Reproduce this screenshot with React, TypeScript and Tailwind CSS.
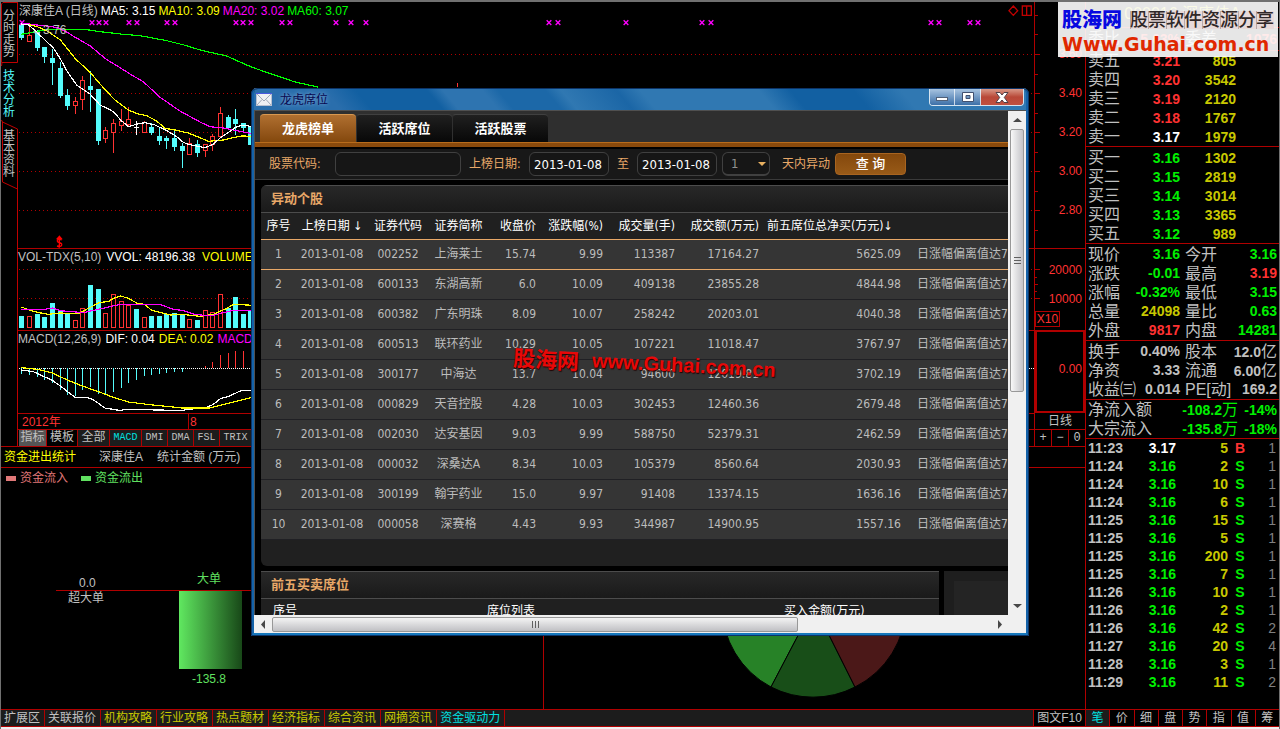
import React from "react";

const SANS = "font-['Liberation_Sans','Noto_Sans_CJK_SC',sans-serif]";
const TAHOMA = "font-['DejaVu_Sans_Condensed','DejaVu_Sans','Noto_Sans_CJK_SC',sans-serif]";

/* Chart data is stored on a grid of thirds of a pixel. */
type Candle = [number, number, number, number, number, boolean];

const candles: Candle[] = [
  [64, 75, 75, 113, 119, false],
  [88, 78, 105, 125, 125, true],
  [112, 90, 95, 143, 152, false],
  [133, 142, 142, 171, 188, false],
  [157, 148, 174, 188, 254, false],
  [181, 186, 204, 288, 293, false],
  [202, 266, 285, 318, 329, false],
  [226, 292, 303, 318, 341, true],
  [247, 228, 240, 299, 329, true],
  [271, 214, 258, 270, 335, false],
  [295, 267, 267, 422, 434, false],
  [316, 381, 390, 416, 429, true],
  [340, 356, 369, 398, 458, true],
  [364, 328, 363, 377, 392, true],
  [385, 321, 357, 376, 382, true],
  [433, 363, 367, 398, 398, true],
  [454, 369, 381, 399, 404, false],
  [478, 385, 408, 423, 435, false],
  [499, 408, 413, 423, 446, false],
  [523, 393, 413, 441, 452, false],
  [547, 429, 438, 453, 503, false],
  [568, 413, 431, 464, 464, true],
  [592, 421, 432, 458, 470, false],
  [616, 432, 433, 452, 470, true],
  [637, 402, 408, 435, 452, true],
  [661, 321, 339, 410, 413, true],
  [685, 345, 351, 384, 386, false],
  [706, 326, 357, 371, 404, false],
  [730, 369, 369, 383, 399, false],
  [751, 380, 380, 435, 435, false],
];

const volumes: [number, number, boolean][] = [
  [64, 213, false], [88, 213, true], [112, 206, false], [133, 216, false], [157, 174, false],
  [181, 195, false], [202, 206, false], [226, 225, true], [247, 189, true], [271, 120, false],
  [295, 132, false], [316, 204, true], [340, 147, true], [364, 168, true], [385, 180, true],
  [409, 192, false], [433, 216, true], [454, 213, false], [478, 213, false], [499, 208, false],
  [523, 204, false], [547, 208, false], [568, 222, true], [592, 225, false], [616, 195, true],
  [637, 202, true], [661, 147, true], [685, 189, false], [706, 156, false], [730, 207, false],
  [751, 195, false],
];

const macdBars: [number, number][] = [
  [64, 386], [88, 390], [112, 396], [133, 404], [157, 413], [181, 434], [202, 450], [226, 453],
  [247, 434], [271, 426], [295, 446], [316, 448], [340, 440], [364, 428], [385, 413], [409, 404],
  [433, 392], [454, 390], [478, 386], [499, 383], [523, 380], [547, 380], [616, 363], [637, 352],
  [661, 330], [685, 323], [706, 318], [730, 318],
];

const signalMarks = [22, 92, 99, 106, 129, 137, 167, 175, 236, 243, 251, 282, 290, 336, 351, 366, 549, 558, 626, 702, 711, 931, 939, 970, 978];

function Line({ points, color }: { points: string; color: string }) {
  return <polyline points={points} fill="none" stroke={color} strokeWidth={3.6} strokeLinejoin="round" />;
}

function Dots({ y }: { y: number }) {
  return <line x1={58} x2={3102} y1={y} y2={y} stroke="#b00000" strokeWidth={3} strokeDasharray="3 9" />;
}

function PriceChart() {
  return (
    <svg className="absolute inset-0 h-full w-full" shapeRendering="crispEdges" aria-hidden="true">
      <g transform="translate(-18 -2) scale(0.33333)">
        {[163, 280, 397, 514, 631].map((y) => <Dots key={y} y={y} />)}
        {candles.map(([x, hi, top, bottom, lo, up]) => (
          <g key={x} stroke={up ? "#ff3232" : "#54fcfc"} strokeWidth={3}>
            <line x1={x} x2={x} y1={hi} y2={top} />
            <line x1={x} x2={x} y1={bottom} y2={lo} />
            {up ? (
              <rect x={x - 6} y={top + 1} width={12} height={bottom - top - 2} fill="#000" />
            ) : (
              <rect x={x - 7.5} y={top} width={15} height={bottom - top} fill="#54fcfc" stroke="none" />
            )}
          </g>
        ))}
        <path d="M409 362V404M402 382H417" stroke="#fff" strokeWidth={3} />
        <line x1={1373} x2={1373} y1={248} y2={262} stroke="#ff3232" strokeWidth={3} />
        {signalMarks.map((x) => (
          <path key={x} d={`M${x * 3 - 7} 61l14 14m0 -14l-14 14`} stroke="#ff00ff" strokeWidth={4} shapeRendering="auto" />
        ))}
        <Line color="#00ff00" points="64,103 100,96 140,89 260,89 300,95 370,103 420,107 500,122 560,137 600,150 680,168 740,195 768,206 885,246 954,261" />
        <Line color="#ff00ff" points="70,70 110,75 150,79 175,84 200,96 226,112 271,138 316,176 360,203 400,228 430,245 480,292 540,333 600,366 630,380 670,384 700,390 760,402" />
        <Line color="#ffff00" points="86,74 112,80 145,95 181,120 226,176 271,218 316,270 345,300 385,330 412,341 440,347 470,363 495,385 525,390 565,399 600,413 625,424 670,420 700,413 725,408 760,409" />
        <Line color="#ffffff" points="64,72 86,75 112,98 160,144 180,175 202,215 230,255 271,283 300,315 325,327 340,335 362,360 385,380 412,372 435,368 465,375 500,392 530,410 550,427 565,433 590,438 615,443 640,433 661,413 690,394 710,380 730,376 760,380" />
        <path d="M178 709l-6 7h12zM185 720q-12-5-13 2q0 5 7 6q7 2 6 7q-2 7-14 3M178 714V743" fill="none" stroke="#ff0000" strokeWidth={4} shapeRendering="auto" />
        <path d="M3040 18l13 14l-13 14l-13-14z M3067 18h27v28h-27z M3080 18v28" fill="none" stroke="#c00000" strokeWidth={4} shapeRendering="auto" />
      </g>
    </svg>
  );
}

function VolumeChart() {
  return (
    <svg className="absolute inset-0 h-full w-full" shapeRendering="crispEdges" aria-hidden="true">
      <g transform="translate(-18 -4) scale(0.33333)">
        <Dots y={73} />
        <Dots y={160} />
        {volumes.map(([x, top, up]) =>
          up ? (
            <rect key={x} x={x - 6} y={top + 1} width={12} height={246 - top} fill="#000" stroke="#ff3232" strokeWidth={3} />
          ) : (
            <rect key={x} x={x - 7.5} y={top} width={15} height={248 - top} fill="#54fcfc" />
          ),
        )}
        <Line color="#ffff00" points="64,186 88,195 112,202 145,208 180,204 235,206 265,190 300,172 325,170 340,160 362,153 385,160 412,175 433,178 454,195 478,202 511,210 547,208 600,214 640,208 680,190 700,178 760,181" />
        <Line color="#ff00ff" points="64,193 133,193 157,189 181,197 250,203 300,192 360,178 480,178 520,193 547,196 580,207 610,211 640,211 661,205 700,196 760,196" />
      </g>
    </svg>
  );
}

function MacdChart() {
  return (
    <svg className="absolute inset-0 h-full w-full" shapeRendering="crispEdges" aria-hidden="true">
      <g transform="translate(-18 -86) scale(0.33333)">
        <line x1={58} x2={3102} y1={370.5} y2={370.5} stroke="#fff" strokeWidth={3} strokeDasharray="3 3" />
        {macdBars.map(([x, end]) => (
          <line key={x} x1={x} x2={x} y1={370} y2={end} stroke={end > 370 ? "#54fcfc" : "#ff3232"} strokeWidth={3} />
        ))}
        <Line color="#ffffff" points="64,375 100,380 157,406 181,423 226,458 262,458 280,464 295,475 316,490 340,493 362,497 375,493 412,494 433,493 465,495 547,496 575,492 616,489 640,478 661,461 685,455 720,438 760,435" />
        <Line color="#ffff00" points="64,368 112,373 157,384 202,405 247,423 295,440 340,457 385,471 433,477 478,482 547,489 628,489 685,475 760,456" />
      </g>
    </svg>
  );
}

function SideTabs() {
  const item = "flex w-full flex-col items-center text-xs leading-3";
  return (
    <nav className="relative w-[17px] shrink-0 bg-black">
      <svg className="absolute inset-0 h-full w-full" aria-hidden="true">
        <path d="M16.5 0.5H2L0.5 2V60.5H16.5V0M1 60.5L0.5 64M0.5 118L1.5 120L16.5 127V444M1.5 120V180L16.5 187" fill="none" stroke="#c00000" />
      </svg>
      <div className="relative flex flex-col gap-3 pt-2 pr-px">
        {["分时走势", "技术分析", "基本资料"].map((name, i) => (
          <button key={name} type="button" aria-label={name} className={`${item} ${i === 1 ? "text-[#54fcfc]" : "text-[#c0c0c0]"}`}>
            {name.split("").map((c) => <span key={c}>{c}</span>)}
          </button>
        ))}
      </div>
    </nav>
  );
}

function IndicatorTabs() {
  const tabs: [string, string][] = [
    ["指标", "w-[28px] bg-[#555] text-[#c0c0c0]"],
    ["模板", "w-[31px] bg-black text-[#c0c0c0]"],
    ["全部", "w-[32px] bg-[#1c1c1c] text-[#c0c0c0]"],
    ["MACD", "w-[32px] bg-[#1c1c1c] text-[#00e0e0]"],
    ["DMI", "w-[26px] bg-[#1c1c1c] text-[#c0c0c0]"],
    ["DMA", "w-[26px] bg-[#1c1c1c] text-[#c0c0c0]"],
    ["FSL", "w-[26px] bg-[#1c1c1c] text-[#c0c0c0]"],
    ["TRIX", "w-[32px] bg-[#1c1c1c] text-[#c0c0c0]"],
  ];
  return (
    <div className="flex h-[17px] border-t border-[#b00000] pl-px">
      {tabs.map(([name, style], i) => (
        <button
          key={name}
          type="button"
          className={`flex items-center justify-center border-r border-[#b00000] font-['Liberation_Mono','Noto_Sans_CJK_SC',monospace] leading-4 ${i > 2 ? "text-[10px]" : "text-xs"} ${style}`}
        >
          {name}
        </button>
      ))}
    </div>
  );
}

function AxisColumn() {
  return (
    <div className="flex w-[51px] shrink-0 flex-col border-l border-[#b00000] text-right text-xs text-[#ff3232]">
      <div className="relative h-[246px] pt-8 pr-[3px]">
        <svg className="absolute inset-0 h-full w-full" shapeRendering="crispEdges" aria-hidden="true">
          <path d="M0 52.5h5M0 91.5h5M0 130.5h5M0 169.5h5M0 208.5h5M0 72.5h3M0 111.5h3M0 150.5h3M0 189.5h3M0 32.5h3M0 13.5h3M0 228.5h3" stroke="#b00000" />
        </svg>
        {["3.60", "3.40", "3.20", "3.00", "2.80"].map((v) => <div key={v} className="h-[39px] leading-[41px]">{v}</div>)}
      </div>
      <div className="relative h-[82px] border-t border-[#b00000] pt-[7px] pr-[3px]">
        <svg className="absolute inset-0 h-full w-full" shapeRendering="crispEdges" aria-hidden="true">
          <path d="M0 20.5h5M0 49.5h5M0 28.5h2M0 35.5h3M0 42.5h2" stroke="#b00000" />
        </svg>
        <div className="h-[29px] leading-[29px]">20000</div>
        <div className="h-[29px] leading-[29px]">10000</div>
        <div className="mt-[-3px] w-[25px] border border-[#b00000] text-center leading-[14px]">X10</div>
      </div>
      <div className="flex h-[83px] items-center justify-end border-2 border-[#b00000] pr-px pb-1.5">
        <span>0.00</span>
      </div>
      <div className="h-[16px] text-center leading-[16px] text-[#c0c0c0]">日线</div>
      <div className="flex h-[17px] border-t border-[#b00000] font-['Liberation_Mono',monospace] text-[#c0c0c0]">
        <button type="button" className="flex-1 border-r border-[#b00000] text-center leading-4">+</button>
        <button type="button" className="flex-1 border-r border-[#b00000] text-center leading-4">−</button>
        <button type="button" className="flex-1 text-center leading-4">0</button>
      </div>
    </div>
  );
}

const G = "text-[#00f000]";
const R = "text-[#ff3232]";
const Y = "text-[#c8c800]";
const W = "text-[#c0c0c0]";

const sells = [["卖五", "3.21", "805"], ["卖四", "3.20", "3542"], ["卖三", "3.19", "2120"], ["卖二", "3.18", "1767"], ["卖一", "3.17", "1979"]];
const buys = [["买一", "3.16", "1302"], ["买二", "3.15", "2819"], ["买三", "3.14", "3014"], ["买四", "3.13", "3365"], ["买五", "3.12", "989"]];

const quotes = [
  ["现价", "3.16", G, "今开", "3.16", G],
  ["涨跌", "-0.01", G, "最高", "3.19", R],
  ["涨幅", "-0.32%", G, "最低", "3.15", G],
  ["总量", "24098", Y, "量比", "0.63", G],
  ["外盘", "9817", R, "内盘", "14281", G],
];
const ratios = [
  ["换手", "0.40%", W, "股本", "12.0亿", W],
  ["净资", "3.33", W, "流通", "6.00亿", W],
  ["收益㈢", "0.014", W, "PE[动]", "169.2", W],
];

const ticks = [
  ["11:23", "3.17", "5", "B", "1"], ["11:24", "3.16", "2", "S", "1"], ["11:24", "3.16", "10", "S", "1"],
  ["11:24", "3.16", "6", "S", "1"], ["11:25", "3.16", "15", "S", "1"], ["11:25", "3.16", "5", "S", "1"],
  ["11:25", "3.16", "200", "S", "1"], ["11:25", "3.16", "7", "S", "1"], ["11:26", "3.16", "10", "S", "1"],
  ["11:26", "3.16", "2", "S", "1"], ["11:26", "3.16", "42", "S", "2"], ["11:27", "3.16", "20", "S", "4"],
  ["11:28", "3.16", "3", "S", "1"], ["11:29", "3.16", "11", "S", "2"],
];

function Book({ rows, color }: { rows: string[][]; color: string }) {
  return (
    <div className="border-b border-[#b00000] pl-0.5">
      {rows.map(([label, price, volume]) => (
        <div key={label} className="flex h-[19px] items-center">
          <span className={`w-[40px] text-base leading-[19px] ${W}`}>{label}</span>
          <span className={`w-[52px] text-right font-bold ${label === "卖一" ? "text-white" : color}`}>{price}</span>
          <span className={`w-[56px] text-right font-bold ${Y}`}>{volume}</span>
        </div>
      ))}
    </div>
  );
}

function Pairs({ rows }: { rows: string[][] }) {
  return (
    <div className="border-b border-[#b00000] pt-px pr-0.5 pl-0.5">
      {rows.map(([a, av, ac, b, bv, bc]) => (
        <div key={a} className="flex h-[19px] items-center whitespace-nowrap">
          <span className={`flex w-[92px] justify-between ${W}`}>
            <span className="text-base leading-[19px]">{a}</span>
            <span className={`font-bold leading-[19px] ${ac}`}>{av}</span>
          </span>
          <span className={`ml-[5px] flex flex-1 justify-between ${W}`}>
            <span className="text-base leading-[19px]">{b}</span>
            <span className={`font-bold leading-[19px] ${bc}`}>
              {bv.replace("亿", "")}
              {bv.endsWith("亿") && <span className="text-base font-normal leading-[19px]">亿</span>}
            </span>
          </span>
        </div>
      ))}
    </div>
  );
}

function QuotePanel() {
  return (
    <aside className="relative w-[194px] shrink-0 border-l border-[#b00000] text-sm">
      <div className={`h-[26px] border-b border-[#b00000] text-center text-base leading-6 ${Y}`}>000016 深康佳A</div>
      <div className="flex h-[23px] items-center border-b border-[#b00000] px-0.5 font-bold">
        <span className={`text-base font-normal ${W}`}>委比</span>
        <span className={`w-[60px] text-right ${R}`}>5.63%</span>
        <span className={`ml-[5px] text-base font-normal ${W}`}>委差</span>
        <span className={`flex-1 text-right ${R}`}>1076</span>
      </div>
      <Book rows={sells} color={R} />
      <div className="pt-px"><Book rows={buys} color={G} /></div>
      <Pairs rows={quotes} />
      <Pairs rows={ratios} />
      <div className="border-b border-[#b00000] pr-0.5 pl-0.5">
        {[["净流入额", "-108.2", "-14%"], ["大宗流入", "-135.8", "-18%"]].map(([label, value, pct]) => (
          <div key={label} className="flex h-[19px] items-center">
            <span className={`w-[80px] text-base leading-[19px] ${W}`}>{label}</span>
            <span className={`w-[70px] text-right font-bold leading-[19px] ${G}`}>
              {value}<span className="text-base font-normal leading-[19px]">万</span>
            </span>
            <span className={`flex-1 text-right font-bold ${G}`}>{pct}</span>
          </div>
        ))}
      </div>
      <table className="w-full table-fixed font-bold">
        <colgroup>
          <col className="w-[42px]" /><col className="w-[48px]" /><col className="w-[52px]" /><col className="w-[24px]" /><col />
        </colgroup>
        <tbody>
          {ticks.map(([time, price, volume, side, count], i) => (
            <tr key={i} className="h-[18px] leading-[18px]">
              <td className={`pl-0.5 ${W}`}>{time}</td>
              <td className={`text-right ${i === 0 ? "text-white" : G}`}>{price}</td>
              <td className={`text-right ${Y}`}>{volume}</td>
              <td className={`text-center ${side === "B" ? R : G}`}>{side}</td>
              <td className="pr-[3px] text-right font-normal text-[#808080]">{count}</td>
            </tr>
          ))}
        </tbody>
      </table>
    </aside>
  );
}

function SiteBanner() {
  return (
    <div className="absolute top-0 right-px w-[220px] bg-white/90 px-1 pt-1.5 pb-px">
      <div className="flex items-center gap-2 leading-6">
        <span className="text-xl font-black leading-6 text-[#0808e0]">股海网</span>
        <span className="bg-[#e8dada] bg-[linear-gradient(90deg,#b8a8a8_1px,transparent_1px)] bg-[length:18px_18px] text-lg leading-[18px] font-medium text-[#302828]">股票软件资源分享</span>
      </div>
      <div className="font-['DejaVu_Sans',sans-serif] text-[19px] font-bold leading-6 text-[#e02800]">Www.Guhai.com.cn</div>
    </div>
  );
}

function FundPanel() {
  return (
    <div className="flex min-h-[241px] flex-1">
      <section className="relative w-[543px] border-r border-[#b00000] text-xs">
        <div className="flex gap-[13px] px-[5px] pt-0.5 leading-4">
          <span className="flex items-center gap-1 text-[#e07878]"><i className="h-[5px] w-[10px] bg-[#e07878]" />资金流入</span>
          <span className="flex items-center gap-1 text-[#60e060]"><i className="h-[5px] w-[10px] bg-[#60e060]" />资金流出</span>
        </div>
        <svg className="absolute inset-0 h-full w-full" aria-hidden="true">
          <defs>
            <linearGradient id="bar"><stop offset="0" stopColor="#60e860" /><stop offset="1" stopColor="#184818" /></linearGradient>
          </defs>
          <path d="M55 122.5H542" stroke="#b00000" />
          <rect x="178" y="123" width="63" height="78" fill="url(#bar)" />
          <text x="78" y="119" fill="#c0c0c0">0.0</text>
          <text x="67" y="134" fill="#c0c0c0">超大单</text>
          <text x="196" y="115" fill="#60e060">大单</text>
          <text x="191" y="215" fill="#60e060">-135.8</text>
        </svg>
      </section>
      <section className="flex-1">
        <svg className="h-[241px] w-full" aria-hidden="true">
          <g stroke="#000">
            <path d="M270 137L178 137A92 92 0 0 0 227 219Z" fill="#278227" />
            <path d="M270 137L227 219A92 92 0 0 0 311 219Z" fill="#184e18" />
            <path d="M270 137L311 219A92 92 0 0 0 362 137Z" fill="#4b1818" />
          </g>
        </svg>
      </section>
    </div>
  );
}

function StatusBar() {
  const links = ["扩展区", "关联报价", "机构攻略", "行业攻略", "热点题材", "经济指标", "综合资讯", "网摘资讯", "资金驱动力"];
  const tools = ["笔", "价", "细", "盘", "势", "指", "值", "筹"];
  const tone = (i: number) => (i < 2 ? "text-[#c0c0c0]" : i === 8 ? "text-[#00e0e0]" : "text-[#c8c800]");
  return (
    <footer className="flex h-[18px] border-y border-[#b00000] bg-[#1c1c1c] text-xs leading-4 whitespace-nowrap">
      {links.map((name, i) => (
        <button key={name} type="button" className={`border-r border-[#b00000] pr-1 pl-[3px] leading-4 ${tone(i)}`}>{name}</button>
      ))}
      <div className="flex-1 border-r border-[#b00000]" />
      <button type="button" className="w-[51px] bg-black text-center leading-4 text-[#c0c0c0]">图文F10</button>
      <div className="flex w-[194px] bg-black text-[#c0c0c0]">
        {tools.map((name, i) => (
          <button key={name} type="button" className={`flex-1 border-l border-[#b00000] text-center leading-4 ${i === 0 ? "bg-[#1c1c1c] text-[#00e0e0]" : ""}`}>{name}</button>
        ))}
      </div>
    </footer>
  );
}

const stocks = [
  ["1", "2013-01-08", "002252", "上海莱士", "15.74", "9.99", "113387", "17164.27", "5625.09"],
  ["2", "2013-01-08", "600133", "东湖高新", "6.0", "10.09", "409138", "23855.28", "4844.98"],
  ["3", "2013-01-08", "600382", "广东明珠", "8.09", "10.07", "258242", "20203.01", "4040.38"],
  ["4", "2013-01-08", "600513", "联环药业", "10.29", "10.05", "107221", "11018.47", "3767.97"],
  ["5", "2013-01-08", "300177", "中海达", "13.7", "10.04", "94600", "12019.81", "3702.19"],
  ["6", "2013-01-08", "000829", "天音控股", "4.28", "10.03", "302453", "12460.36", "2679.48"],
  ["7", "2013-01-08", "002030", "达安基因", "9.03", "9.99", "588750", "52379.31", "2462.59"],
  ["8", "2013-01-08", "000032", "深桑达A", "8.34", "10.03", "105379", "8560.64", "2030.93"],
  ["9", "2013-01-08", "300199", "翰宇药业", "15.0", "9.97", "91408", "13374.15", "1636.16"],
  ["10", "2013-01-08", "000058", "深赛格", "4.43", "9.93", "344987", "14900.95", "1557.16"],
];

function StockTable() {
  return (
    <table className="w-full table-fixed text-xs whitespace-nowrap">
      <colgroup>
        <col className="w-[35px]" /><col className="w-[72px]" /><col className="w-[60px]" /><col className="w-[61px]" />
        <col className="w-[51px]" /><col className="w-[67px]" /><col className="w-[72px]" /><col className="w-[84px]" />
        <col className="w-[142px]" /><col />
      </colgroup>
      <thead>
        <tr className="h-[26px] border-b border-[#e8a868] text-white">
          {["序号", "上榜日期 ↓", "证券代码", "证券简称"].map((h) => <th key={h} className="font-normal">{h}</th>)}
          {["收盘价", "涨跌幅(%)", "成交量(手)", "成交额(万元)"].map((h) => <th key={h} className="pr-1 text-right font-normal">{h}</th>)}
          <th className="pl-1 text-left font-normal">前五席位总净买(万元)↓</th>
          <th aria-hidden="true" />
        </tr>
      </thead>
      <tbody className="bg-[#353535] text-[#bcbcbc]">
        {stocks.map((row, r) => (
          <tr key={row[0]} className={`h-[30px] border-b ${r === 0 ? "border-[#e8a868]" : "border-[#202024]"}`}>
            {row.map((cell, c) => <td key={c} className={c < 4 ? "text-center" : "pr-1 text-right"}>{cell}</td>)}
            <td className="pl-3">日涨幅偏离值达7</td>
          </tr>
        ))}
      </tbody>
    </table>
  );
}

function PanelTitle({ children }: { children: React.ReactNode }) {
  return (
    <h2 className="h-[28px] border-y border-[#4c4c4c] bg-linear-to-b from-[#282828] to-[#1a1a1a] pl-2.5 text-[13px] font-bold leading-[26px] text-[#e8a868]">
      {children}
    </h2>
  );
}

function QueryForm() {
  const box = "h-6 rounded-md border border-[#404040] bg-[#161616] text-white";
  return (
    <form className="flex h-[31px] items-center border-b border-[#3a3a3a] bg-[#181818] pl-3.5 text-xs text-[#e8a868]" onSubmit={(e) => e.preventDefault()}>
      <label htmlFor="code" className="w-[66px]">股票代码:</label>
      <input id="code" className={`w-[126px] px-1 ${box}`} />
      <label htmlFor="from" className="w-[68px] pl-2">上榜日期:</label>
      <input id="from" defaultValue="2013-01-08" className={`w-20 px-1 text-[13px] ${box}`} />
      <label htmlFor="to" className="w-7 text-center">至</label>
      <input id="to" defaultValue="2013-01-08" className={`w-20 px-1 text-[13px] ${box}`} />
      <span className="relative ml-[5px]">
        <select id="days" defaultValue="1" className="h-6 w-12 appearance-none rounded-md border border-b-2 border-[#404040] bg-[#161616] pl-2 text-[13px] text-[#909090]">
          <option>1</option>
        </select>
        <svg className="pointer-events-none absolute top-2.5 right-1 h-1 w-2" viewBox="0 0 8 4" aria-hidden="true"><path d="M0 0h8L4 4z" fill="#e8b060" /></svg>
      </span>
      <label htmlFor="days" className="pl-3">天内异动</label>
      <button type="submit" className="ml-[5px] h-[22px] w-[71px] rounded border border-[#a86420] bg-linear-to-b from-[#84480c] to-[#985a18] text-[13px] font-medium leading-5 text-white">查 询</button>
    </form>
  );
}

function Arrow({ d }: { d: string }) {
  return (
    <svg className="h-[18px] w-[18px] shrink-0" viewBox="0 0 18 18" aria-hidden="true"><path d={d} fill="#484848" /></svg>
  );
}

function DragonTigerWindow() {
  const cap = "flex items-center justify-center border-white/70 bg-linear-to-b";
  const tab = "h-7 w-24 rounded-t border-t text-[13px] font-bold text-white";
  return (
    <section className={`absolute top-[86px] left-[250px] flex h-[548px] w-[778px] flex-col rounded-t-md border-x-[3px] border-t border-b-[3px] border-x-[#1462a8] border-t-[#9cc4e4] border-b-[#1678bc] outline-1 -outline-offset-1 outline-[#0c3468] ${TAHOMA}`}>
      <header className="relative flex h-[21px] items-center gap-2 rounded-t bg-[linear-gradient(50deg,#2a6eac_0%,#2a6eac_11%,#1260a2_15%,#1260a2_24%,#2e74b0_26%,#2e74b0_31%,#1c68a8_33%,#1c68a8_39%,#3078b2_41%,#1b66a6_48%,#3078b2_51%,#3078b2_66%,#1260a2_70%,#1260a2_78%,#3078b2_84%,#3078b2_100%)] pl-0.5">
        <svg className="h-[13px] w-4" viewBox="0 0 16 13" aria-hidden="true">
          <rect x=".5" y=".5" width="15" height="12" fill="#eef0f4" stroke="#b8c0d0" />
          <path d="M1 1l7 7l7-7M1 12l5-5.500M15 12l-5-5.500" fill="none" stroke="#a0a8b8" />
          <path d="M0 .5h16" stroke="#4858e0" />
        </svg>
        <h1 className="text-xs leading-5 text-[#080850] [text-shadow:0_0_4px_#90b8dc]">龙虎席位</h1>
        <div className="absolute top-0 right-0.5 flex h-[17px] w-[95px] overflow-hidden rounded-b border border-t-0 border-white/80">
          <button type="button" aria-label="最小化" className={`w-[25px] border-r from-[#a8c4e0] to-[#3c70a8] ${cap}`}>
            <svg className="mt-1 h-1 w-3" viewBox="0 0 12 4"><rect x=".5" y=".5" width="11" height="3" fill="#fff" stroke="#506078" /></svg>
          </button>
          <button type="button" aria-label="最大化" className={`w-[26px] border-r from-[#a8c4e0] to-[#3c70a8] ${cap}`}>
            <svg className="h-[10px] w-3" viewBox="0 0 12 10"><path d="M.5 .5h11v9H.5zM4 3.500v3h4v-3z" fill="#fff" fillRule="evenodd" stroke="#405070" /></svg>
          </button>
          <button type="button" aria-label="关闭" className={`flex-1 from-[#d89888] via-[#b84838] to-[#c05040] ${cap}`}>
            <svg className="h-[11px] w-[14px]" viewBox="0 0 14 11"><path d="M1 .5h4l2 2.500l2-2.500h4L9.300 5.500L13 10.500H9L7 8l-2 2.500H1L4.700 5.500z" fill="#fff" stroke="#504048" /></svg>
          </button>
        </div>
      </header>

      <div className="flex min-h-0 flex-1 border-t border-l border-[#505050]">
        <div className="min-w-0 flex-1 overflow-hidden bg-black">
          <div className="flex h-8 items-end gap-0 border-b border-[#b86c1c] bg-[#2f2f2f] pl-[5px]" role="tablist">
            <button type="button" role="tab" aria-selected="true" className={`${tab} border-[#d89850] bg-linear-to-b from-[#b07030] to-[#84480c]`}>龙虎榜单</button>
            <button type="button" role="tab" aria-selected="false" className={`${tab} border-[#404040] border-l border-l-[#303030] bg-linear-to-b from-[#202020] to-[#080808]`}>活跃席位</button>
            <button type="button" role="tab" aria-selected="false" className={`${tab} border-[#404040] border-l border-l-[#303030] bg-linear-to-b from-[#202020] to-[#080808]`}>活跃股票</button>
          </div>
          <div className="mb-0.5 h-1 bg-[#8a4a0c]" />
          <QueryForm />
          <div className="pt-[5px] pl-1.5">
            <div className="overflow-hidden rounded-tl-md rounded-bl-md bg-[#202020] pb-[26px]">
              <PanelTitle>异动个股</PanelTitle>
              <StockTable />
            </div>
            <div className="flex gap-[5px] pt-[5px]">
              <div className="w-[678px] shrink-0 bg-[#202020]">
                <PanelTitle>前五买卖席位</PanelTitle>
                <table className="w-full table-fixed text-xs text-white">
                  <colgroup><col className="w-[150px]" /><col className="w-[264px]" /><col /></colgroup>
                  <thead>
                    <tr className="h-6">
                      <th className="pl-3 text-left font-normal">序号</th>
                      <th className="pl-[76px] text-left font-normal">席位列表</th>
                      <th className="pl-[109px] text-left font-normal">买入金额(万元)</th>
                    </tr>
                  </thead>
                </table>
              </div>
              <div className="flex-1 bg-[#1e1e1e] pt-2.5 pl-2.5"><div className="h-full bg-[#242424]" /></div>
            </div>
          </div>
        </div>
        <div className="flex w-[18px] shrink-0 flex-col items-center bg-[#f0f0f0]">
          <Arrow d="M5 11h9L9.500 7z" />
          <div className="flex h-[263px] w-[14px] flex-col items-center justify-center gap-0.5 rounded-xs border border-[#989898] bg-linear-to-r from-[#f8f8f8] to-[#c4c4c8]">
            {[0, 1, 2].map((n) => <i key={n} className="h-px w-[7px] bg-[#606060]" />)}
          </div>
          <div className="flex-1" />
          <Arrow d="M5 7h9L9.500 11z" />
        </div>
      </div>
      <div className="flex h-[18px] shrink-0 items-center bg-[#f0f0f0]">
        <Arrow d="M11 5v9L7 9.500z" />
        <div className="flex h-[15px] w-[526px] items-center justify-center gap-0.5 rounded-xs border border-[#989898] bg-linear-to-b from-[#f4f4f4] to-[#c0c0c4]">
          {[0, 1, 2].map((n) => <i key={n} className="h-[7px] w-px bg-[#606060]" />)}
        </div>
        <div className="flex-1" />
        <Arrow d="M7 5v9l4-4.500z" />
        <div className="w-[17px]" />
      </div>

      <div className="pointer-events-none absolute top-[260px] left-[259px] flex rotate-3 items-center gap-[13px] whitespace-nowrap font-bold text-[#e80808] [text-shadow:1px_1px_1px_#200000]">
        <span className="font-['Noto_Sans_CJK_SC',sans-serif] text-[22px] leading-7">股海网</span>
        <span className="font-['Liberation_Sans',sans-serif] text-xl leading-7">www.Guhai.com.cn</span>
      </div>
    </section>
  );
}

export default function App() {
  return (
    <main className={`relative flex min-h-screen flex-col overflow-hidden border-x border-t-2 border-[#707070] bg-black text-[#c0c0c0] ${SANS}`}>
      <div className="flex flex-1">
        <div className="flex min-w-0 flex-1 flex-col">
          <div className="flex">
            <SideTabs />
            <div className="flex min-w-0 flex-1 flex-col text-xs whitespace-nowrap">
              <div className="relative h-[246px]">
                <PriceChart />
                <div className="relative flex gap-[3px] pl-px leading-[18px]">
                  <span>深康佳A (日线)</span>
                  <span className="text-white">MA5: 3.15</span>
                  <span className="text-[#ffff00]">MA10: 3.09</span>
                  <span className="text-[#ff00ff]">MA20: 3.02</span>
                  <span className="text-[#00ff00]">MA60: 3.07</span>
                </div>
                <div className="relative pl-[13px] leading-5">←3.76</div>
              </div>
              <div className="relative h-[82px] border-t border-[#b00000]">
                <VolumeChart />
                <div className="relative flex gap-[5px] leading-4">
                  <span>VOL-TDX(5,10)</span>
                  <span className="text-white">VVOL: 48196.38</span>
                  <span className="pl-0.5 text-[#ffff00]">VOLUME</span>
                </div>
              </div>
              <div className="relative h-[83px] border-t border-[#b00000]">
                <MacdChart />
                <div className="relative flex gap-1 leading-4">
                  <span>MACD(12,26,9)</span>
                  <span className="text-white">DIF: 0.04</span>
                  <span className="text-[#ffff00]">DEA: 0.02</span>
                  <span className="text-[#ff00ff]">MACD</span>
                </div>
              </div>
              <div className="flex h-4 border-t border-[#b00000] leading-4 text-[#ff3232]">
                <span className="w-[171px] border-r border-[#b00000] pl-1">2012年</span>
                <span className="pl-px">8</span>
              </div>
              <IndicatorTabs />
            </div>
            <AxisColumn />
          </div>
          <div className="flex h-[22px] items-center border-y border-[#b00000] pl-[3px] text-xs">
            <span className="w-[95px] text-[#ffff00]">资金进出统计</span>
            <span className="w-[58px]">深康佳A</span>
            <span>统计金额 (万元)</span>
          </div>
          <FundPanel />
        </div>
        <QuotePanel />
      </div>
      <StatusBar />
      <div className="h-0.5 bg-[#f0f0f0]" />
      <SiteBanner />
      <DragonTigerWindow />
    </main>
  );
}
